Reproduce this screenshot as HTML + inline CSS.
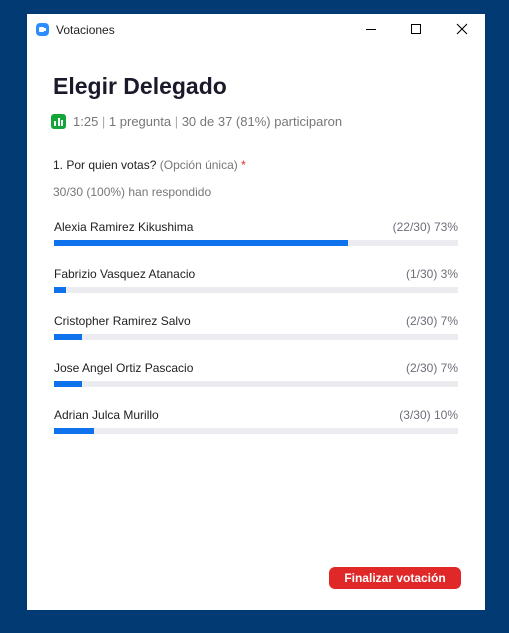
<!DOCTYPE html>
<html><head><meta charset="utf-8"><style>
*{margin:0;padding:0;box-sizing:border-box}
body{width:509px;height:633px;background:#023a73;font-family:"Liberation Sans",sans-serif;position:relative;overflow:hidden}
.win{position:absolute;left:27px;top:14px;width:458px;height:596px;background:#fff}
.abs{position:absolute}
.t{font-size:12px;color:#222;white-space:nowrap}
.g{color:#777}
.bar{position:absolute;left:27px;width:404px;height:6px;background:#ececf0}
.bar i{display:block;height:6px;background:#0e72ed}
.pct{position:absolute;right:27px;font-size:12px;color:#6e6e7a}
</style></head><body>
<div class="win">
 <div class="abs" style="left:9px;top:9px;width:13px;height:13px;border-radius:4px;background:#2d8cff"><div class="abs" style="left:3px;top:4px;width:5px;height:5px;background:#fff;border-radius:1px"></div><div class="abs" style="left:8px;top:5px;width:2px;height:3px;background:#fff"></div></div>
 <div class="abs t" style="left:29px;top:9px">Votaciones</div>
 <div class="abs" style="left:339px;top:15px;width:10px;height:1px;background:#000"></div>
 <div class="abs" style="left:384px;top:10px;width:10px;height:10px;border:1px solid #000"></div>
 <svg class="abs" style="left:429px;top:9px" width="12" height="12"><path d="M1 1L11 11M11 1L1 11" stroke="#000" stroke-width="1.1"/></svg>
 <div class="abs" style="left:26px;top:59px;font-size:23px;font-weight:bold;color:#1a1a2a">Elegir Delegado</div>
 <div class="abs" style="left:24px;top:100px;width:15px;height:15px;background:#13a538;border-radius:3px">
  <div class="abs" style="left:3px;top:7px;width:2px;height:5px;background:#fff"></div>
  <div class="abs" style="left:6.5px;top:4px;width:2px;height:8px;background:#fff"></div>
  <div class="abs" style="left:10px;top:6px;width:2px;height:6px;background:#fff"></div>
 </div>
 <div class="abs t g" style="left:46px;top:100px;font-size:13px">1:25 <span style="color:#aaa">|</span> 1 pregunta <span style="color:#aaa">|</span> 30 de 37 (81%) participaron</div>
 <div class="abs t" style="left:26px;top:144px">1. Por quien votas? <span class="g">(Opción única)</span> <span style="color:#e02828">*</span></div>
 <div class="abs t g" style="left:26px;top:171px">30/30 (100%) han respondido</div>

 <div class="abs t" style="left:27px;top:206px">Alexia Ramirez Kikushima</div><div class="pct" style="top:206px">(22/30) 73%</div><div class="bar" style="top:226px"><i style="width:294px"></i></div>
 <div class="abs t" style="left:27px;top:253px">Fabrizio Vasquez Atanacio</div><div class="pct" style="top:253px">(1/30) 3%</div><div class="bar" style="top:273px"><i style="width:12px"></i></div>
 <div class="abs t" style="left:27px;top:300px">Cristopher Ramirez Salvo</div><div class="pct" style="top:300px">(2/30) 7%</div><div class="bar" style="top:320px"><i style="width:28px"></i></div>
 <div class="abs t" style="left:27px;top:347px">Jose Angel Ortiz Pascacio</div><div class="pct" style="top:347px">(2/30) 7%</div><div class="bar" style="top:367px"><i style="width:28px"></i></div>
 <div class="abs t" style="left:27px;top:394px">Adrian Julca Murillo</div><div class="pct" style="top:394px">(3/30) 10%</div><div class="bar" style="top:414px"><i style="width:40px"></i></div>

 <div class="abs" style="left:302px;top:553px;width:132px;height:22px;background:#e02828;border-radius:6px;color:#fff;font-weight:bold;font-size:12px;text-align:center;line-height:22px">Finalizar votación</div>
</div>
</body></html>
